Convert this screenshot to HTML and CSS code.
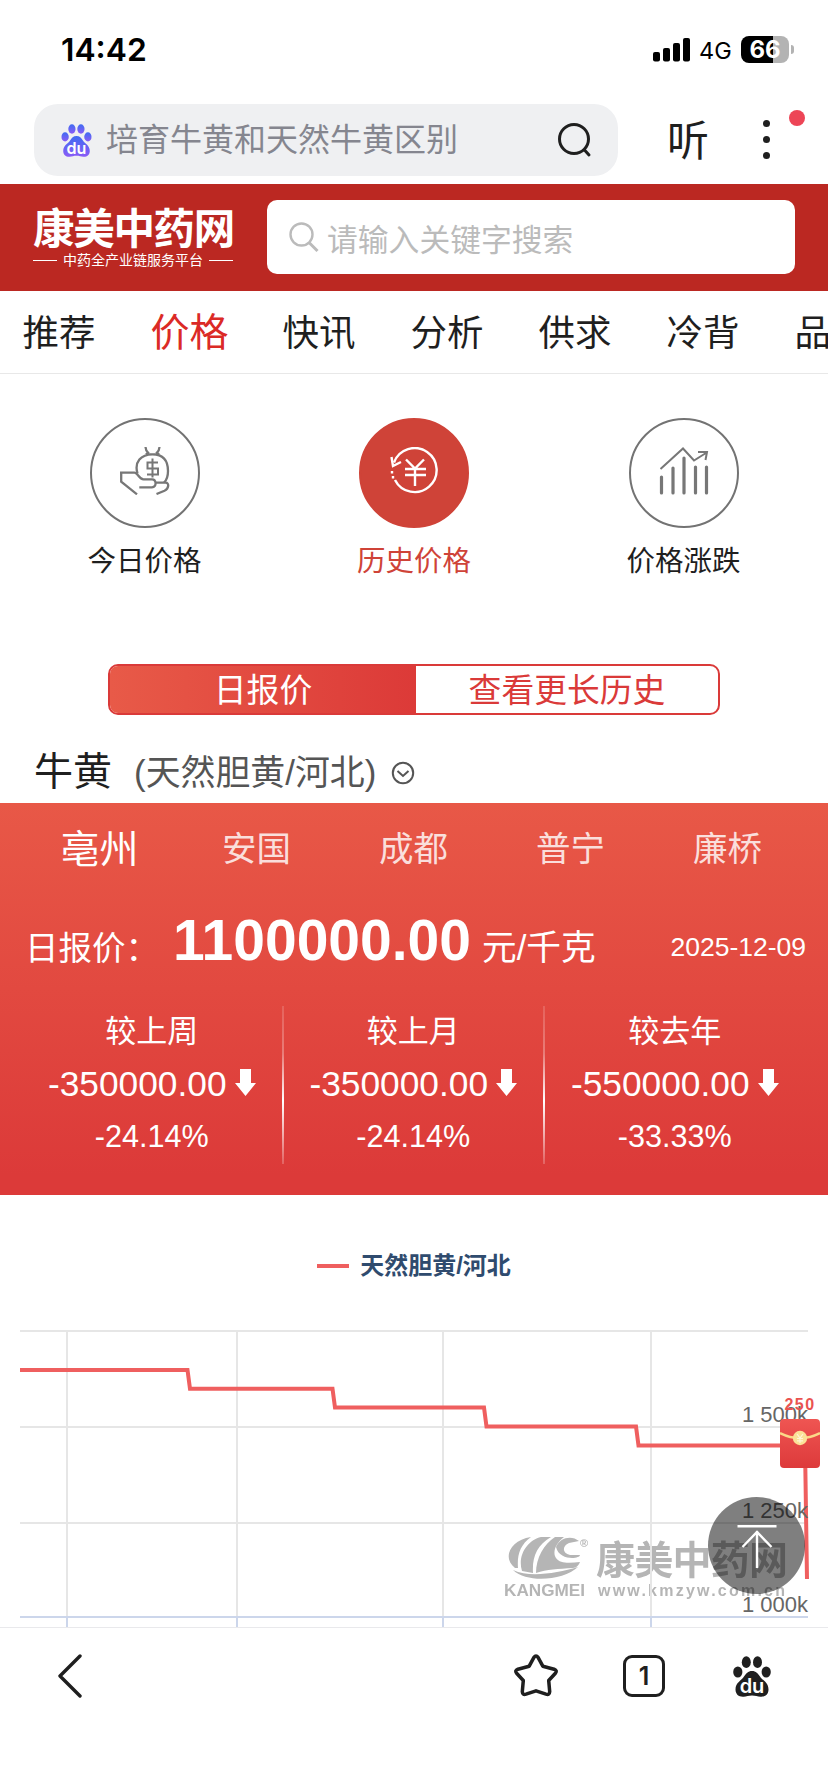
FILE: index.html
```html
<!DOCTYPE html>
<html lang="zh-CN">
<head>
<meta charset="utf-8">
<title>康美中药网</title>
<link rel="stylesheet" href="styles.css">
</head>
<body>
<svg class="defs" width="0" height="0" aria-hidden="true">
  <defs>
    <linearGradient id="pawGrad" x1="0" y1="0" x2="0" y2="1"><stop offset="0" stop-color="#3f6bf2"/><stop offset="1" stop-color="#8a5cf6"/></linearGradient>
    <symbol id="paw" viewBox="0 0 38 41">
      <ellipse cx="4.8" cy="16" rx="4.6" ry="5.6"/>
      <ellipse cx="13.3" cy="6.2" rx="4.5" ry="5.9"/>
      <ellipse cx="24.5" cy="6.2" rx="4.5" ry="5.9"/>
      <ellipse cx="33.2" cy="16" rx="4.6" ry="5.6"/>
      <path d="M19 15c4 0 6 2.500 8 5.500 2.500 4 8.500 6 8.500 13 0 5-3.500 7.500-8 7.200-3-.3-5-1.200-8.500-1.200s-5.500.9-8.500 1.200c-4.500.3-8-2.200-8-7.200 0-7 6-9 8.500-13 2-3 4-5.500 8-5.500z"/>
    </symbol>
  </defs>
</svg>
<div class="screen">
  <header class="status">
    <span class="time">14:42</span>
    <div class="status-right">
      <svg class="signal" width="38" height="24" viewBox="0 0 38 24"><rect x="0" y="14" width="7" height="9.500" rx="2"/><rect x="10" y="10" width="7" height="13.500" rx="2"/><rect x="20" y="5" width="7" height="18.500" rx="2"/><rect x="30" y="0" width="7" height="23.500" rx="2"/></svg>
      <span class="net">4G</span>
      <div class="battery"><span>66</span></div>
      <i class="nub"></i>
    </div>
  </header>

  <div class="address">
    <div class="address-box">
      <svg class="baidu" width="31" height="33" viewBox="0 0 38 41"><g fill="url(#pawGrad)"><use href="#paw"/></g><text x="19" y="37" text-anchor="middle" class="du">du</text></svg>
      <span class="query">培育牛黄和天然牛黄区别</span>
      <svg class="glass" width="36" height="36" viewBox="0 0 36 36" fill="none" stroke="#1f1f1f" stroke-width="3" stroke-linecap="round"><circle cx="17" cy="17" r="14.500"/><path d="M27.500 28l4.500 5"/></svg>
    </div>
    <span class="listen">听</span>
    <div class="more"><i></i><i></i><i></i><b></b></div>
  </div>

  <div class="brand">
    <div class="logo">
      <div class="logo-name">康美中药网</div>
      <div class="logo-sub"><i></i><span>中药全产业链服务平台</span><i></i></div>
    </div>
    <div class="search">
      <svg width="30" height="31" viewBox="0 0 30 31" fill="none" stroke="#bbb" stroke-width="2.400"><circle cx="12.500" cy="12.500" r="11"/><path d="M20 20.500l8.500 8.500" stroke-width="3"/></svg>
      <span>请输入关键字搜索</span>
    </div>
  </div>

  <nav class="tabs">
    <a>推荐</a><a class="on">价格</a><a>快讯</a><a>分析</a><a>供求</a><a>冷背</a><a>品种</a>
  </nav>

  <section class="kinds">
    <div class="kind">
      <div class="disc">
        <svg width="50" height="48" viewBox="0 0 50 48" fill="none" stroke="#777" stroke-width="2.300"><path d="M25.500 0q.2 3.500 2.500 5.500l-2 2M39.500 0q-.2 3.500-2.500 5.500l2 2M26 7.300h13M17.500 26.500C14 15 21 7.300 32.500 7.300S48 14 48 24q0 8-4 11.500"/><path d="M0 25.700h14.500c3.500 0 4.500 6.600 9 6.600h8.500c4.500 0 5 8 0 8H19.300M36 35.700h9.500c4 0 3.500 6-1 8l-8 3.300M1.200 25.700v9L17 47.300"/><path d="M38 15.500H27.500v6H38v6H27M32.500 11.500v19" stroke-width="2"/></svg>
      </div>
      <span>今日价格</span>
    </div>
    <div class="kind on">
      <div class="disc">
        <svg width="48" height="48" viewBox="0 0 48 48" fill="none" stroke="#fff" stroke-width="2.400"><path d="M4 15.500A22 22 0 1 1 5 33"/><path d="M1.500 10l1.500 9 8-4"/><path d="M2 24v2.500M3 29v2.500M16 12.500l9 9 9-9M25 21v18M15 22h21M15 28h21"/></svg>
      </div>
      <span>历史价格</span>
    </div>
    <div class="kind">
      <div class="disc">
        <svg width="50" height="48" viewBox="0 0 50 48" fill="none" stroke="#777" stroke-width="2"><path d="M1.500 22L24 1.500 35 13.500 47 6M39 5l9 0-1.500 8"/><path d="M2.500 30v16M14 21v25M25 11v35M36.500 20v26M47.500 20v26" stroke-width="3.200" stroke-linecap="round"/></svg>
      </div>
      <span>价格涨跌</span>
    </div>
  </section>

  <div class="switch"><span class="on">日报价</span><span>查看更长历史</span></div>

  <div class="herb">
    <h1>牛黄</h1>
    <span>(天然胆黄/河北)</span>
    <svg width="24" height="24" viewBox="0 0 24 24" fill="none" stroke="#555" stroke-width="2"><circle cx="12" cy="12" r="10.200"/><path d="M6.500 10l5.500 5 5.500-5"/></svg>
  </div>

  <section class="panel">
    <div class="cities"><span class="on">亳州</span><span>安国</span><span>成都</span><span>普宁</span><span>廉桥</span></div>
    <div class="quote">
      <span class="quote-label">日报价：</span>
      <strong>1100000.00</strong>
      <span class="unit">元/千克</span>
      <time>2025-12-09</time>
    </div>
    <div class="changes">
      <div class="change"><span class="name">较上周</span><span class="amount">-350000.00<svg width="21" height="27" viewBox="0 0 21 27"><path d="M5 0h11v14h5L10.500 27 0 14h5z"/></svg></span><span class="rate">-24.14%</span></div>
      <div class="change"><span class="name">较上月</span><span class="amount">-350000.00<svg width="21" height="27" viewBox="0 0 21 27"><path d="M5 0h11v14h5L10.500 27 0 14h5z"/></svg></span><span class="rate">-24.14%</span></div>
      <div class="change"><span class="name">较去年</span><span class="amount">-550000.00<svg width="21" height="27" viewBox="0 0 21 27"><path d="M5 0h11v14h5L10.500 27 0 14h5z"/></svg></span><span class="rate">-33.33%</span></div>
    </div>
  </section>

  <section class="trend">
    <div class="legend"><i></i><span>天然胆黄/河北</span></div>
    <svg class="chart" width="828" height="327" viewBox="0 1300 828 327">
      <g class="mark">
        <path d="M515 1568c-13-10-5-28 16-31-11 8-14 18-13 31zM522 1571c-5-16 6-31 19-34l10 0c-14 8-19 20-18 36zM536 1573c0-15 8-29 19-36h9c-8 6-12 15-8 21 4 6 14 5 24 4-1 3-4 6-7 6-15 1-26 1-37 5zM556 1547c4-10 16-12 23-6l-10 2c-7 3-7 10 1 12h10c0 4-21 6-24-8zM513 1570c17 8 44 3 65-3-14 13-50 17-65 3z"/>
        <text x="504" y="1596" font-size="17" textLength="81" lengthAdjust="spacingAndGlyphs">KANGMEI</text>
        <text x="580" y="1547" font-size="11">®</text>
        <text x="596" y="1574" font-size="39" textLength="192" class="cjk">康美中药网</text>
        <text x="598" y="1596" font-size="16" textLength="187">www.kmzyw.com.cn</text>
      </g>
      <g stroke="#e6e6e6" stroke-width="2" fill="none">
        <path d="M20 1331H808M20 1427H808M20 1523H808M67 1330V1617M237 1330V1617M443 1330V1617M651 1330V1617"/>
      </g>
      <path d="M20 1617H808M67 1617V1627M237 1617V1627M443 1617V1627M651 1617V1627" stroke="#ccd6eb" stroke-width="2"/>
      <path d="M20 1370H187.500L190 1388.800H332.500L335 1407.500H484L486.500 1426.500H636L638.500 1445.500H805L807 1579" fill="none" stroke="#ef5f5f" stroke-width="4"/>
      <g class="ticks"><text x="808" y="1421.500">1 500k</text><text x="808" y="1517.500">1 250k</text><text x="808" y="1611.500">1 000k</text></g>
    </svg>
    <div class="packet">
      <span>250</span>
      <svg width="40" height="49" viewBox="0 0 40 49"><defs><linearGradient id="pk" x1="0" y1="0" x2="0" y2="1"><stop offset="0" stop-color="#ef5552"/><stop offset="1" stop-color="#dd3a3b"/></linearGradient></defs><rect width="40" height="49" rx="4" fill="url(#pk)"/><path d="M0 14q20 10 40 0" fill="none" stroke="#fbd888" stroke-width="2.500"/><circle cx="20" cy="19" r="7.200" fill="#fbe197"/><path d="M17 15l3 4 3-4M20 19v5M17 19.500h6M17 21.800h6" stroke="#fff6d8" stroke-width="1.200" fill="none"/></svg>
    </div>
    <div class="totop"><svg width="40" height="44" viewBox="0 0 40 44" fill="none" stroke="#fff" stroke-width="2.400"><path d="M.5 2.200h39M20 7v37M5.500 23L20 8l14.500 15"/></svg></div>
  </section>

  <footer class="toolbar">
    <svg class="back" width="26" height="44" viewBox="0 0 26 44" fill="none" stroke="#1f1f1f" stroke-width="3.400" stroke-linecap="round" stroke-linejoin="round"><path d="M23 2L3 22l20 20"/></svg>
    <div class="tools">
      <svg width="44" height="44" viewBox="-1 0 44 44" fill="none" stroke="#1f1f1f" stroke-width="3.500" stroke-linejoin="round"><path d="M18.800 3.600q2.200-3 4.400 0l4.600 8.600 11.300 3q3.400 1.300 1.300 4l-6.700 7.300 1 11.200q-.2 3.600-3.700 2.500L21 36.800l-10 3.400q-3.500 1.100-3.700-2.500l1-11.200L1.600 19.200q-2.100-2.700 1.300-4l11.300-3z"/></svg>
      <div class="count">1</div>
      <svg width="38" height="41" viewBox="0 0 38 41"><g fill="#1f1f1f"><use href="#paw"/></g><text x="19" y="37" text-anchor="middle" class="du">du</text></svg>
    </div>
  </footer>
</div>
</body>
</html>
```
FILE: styles.css
```css
* { box-sizing: border-box; }
body { margin: 0; background: #fff; font-family: "Liberation Sans", "Noto Sans CJK SC", sans-serif; color: #1f1f1f; }
svg { display: block; flex: none; }
.defs { position: absolute; }
.screen { width: 828px; height: 1792px; overflow: hidden; display: flex; flex-direction: column; white-space: nowrap; }
.screen > * { flex: none; }

.status { height: 104px; padding: 0 34px 5px 61px; display: flex; align-items: center; justify-content: space-between; font-family: Inter, sans-serif; color: #000; }
.time { font-size: 31.800px; font-weight: 600; }
.status-right { display: flex; align-items: center; }
.net { font-size: 23.500px; margin: 1px 0 0 8px; width: 34px; }
.battery { width: 48px; height: 27px; margin-left: 8px; border-radius: 8px; background: linear-gradient(90deg, #000 66%, #b3b3b3 66%); color: #fff; font-size: 24px; font-weight: 700; line-height: 28px; text-align: center; }
.nub { width: 3px; height: 9px; margin-left: 2px; background: #b3b3b3; border-radius: 0 3px 3px 0; }

.address { height: 80px; padding-left: 34px; display: flex; align-items: flex-start; }
.address-box { width: 584px; height: 72px; border-radius: 24px; background: #eff0f2; display: flex; align-items: center; padding: 0 25px 0 27px; }
.du { font-family: Inter, sans-serif; font-size: 20px; font-weight: 600; fill: #fff; }
.query { margin-left: 14px; font-size: 32px; color: #85868f; flex: 1; line-height: 75px; }
.listen { font-size: 42px; line-height: 75px; margin-left: 49px; }
.more { position: relative; width: 7px; height: 39px; margin: 16px 0 0 54px; display: flex; flex-direction: column; justify-content: space-between; }
.more i { width: 7px; height: 7px; border-radius: 50%; background: #1f1f1f; }
.more b { position: absolute; left: 26px; top: -10px; width: 16px; height: 16px; border-radius: 50%; background: #ed4556; }

.brand { height: 107px; background: #bb2822; padding: 0 33px; display: flex; justify-content: space-between; align-items: flex-start; }
.logo { width: 200px; padding-top: 23px; color: #fff; }
.logo-name { font-size: 41.500px; font-weight: 700; line-height: 46px; letter-spacing: -1.300px; }
.logo-sub { display: flex; align-items: center; justify-content: space-between; font-size: 14px; line-height: 14px; }
.logo-sub i { width: 24px; height: 1px; background: #fff; }
.search { width: 528px; height: 74px; margin-top: 16px; border-radius: 10px; background: #fff; padding-left: 22px; display: flex; align-items: center; color: #bbb; font-size: 30.800px; }
.search svg { margin-top: 1px; }
.search span { margin: 0 0 0 8px; }

.tabs { height: 83px; border-bottom: 1px solid #e8e8e8; display: grid; grid-template-columns: 118px 143px repeat(5, 128px); overflow: hidden; }
.tabs a { text-align: center; font-size: 36.500px; line-height: 86px; }
.tabs .on { font-size: 39px; color: #db2a26; line-height: 84px; }
.tabs .on ~ a { margin: 0 6px 0 -6px; }

.kinds { display: grid; grid-template-columns: repeat(3, 269.500px); justify-content: center; padding-top: 44px; height: 290px; }
.kind { display: flex; flex-direction: column; align-items: center; font-size: 28.500px; }
.disc { width: 110px; height: 110px; border: 2px solid #737373; border-radius: 50%; display: flex; align-items: center; justify-content: center; padding-bottom: 4px; }
.kind > span { line-height: 40px; margin-top: 13px; }
.kind.on { color: #cf4338; }
.kind.on .disc { background: #cf4338; border-color: #cf4338; }

.switch { width: 612px; height: 51px; margin-left: 108px; border: 2px solid #da3a39; border-radius: 10px; overflow: hidden; display: grid; grid-template-columns: 306px 1fr; font-size: 32.800px; line-height: 50px; text-align: center; color: #da3a39; }
.switch .on { background: linear-gradient(90deg, #e85a48, #dc3a38); color: #fff; }

.herb { height: 88px; padding: 26px 0 0 34px; display: flex; align-items: center; }
.herb h1 { margin: 0; font-size: 39px; line-height: 60px; font-weight: 400; }
.herb span { font-size: 34.900px; color: #555; margin: -4px 0 0 22px; }
.herb svg { margin: 2px 0 0 15px; }

.panel { height: 392px; background: linear-gradient(#e85847, #dc3a39 95%); color: #fff; }
.cities { display: grid; grid-template-columns: repeat(5, 157px); padding-left: 21px; height: 92px; line-height: 93px; text-align: center; font-size: 34.500px; color: rgba(255,255,255,.82); }
.cities .on { font-size: 39px; color: #fff; }
.quote { height: 110px; padding: 0 22px 0 25px; display: flex; align-items: baseline; line-height: 90px; }
.quote-label { font-size: 33.500px; width: 148px; }
.quote strong { font-size: 57px; width: 301px; }
.unit { font-size: 34.700px; margin-left: 8px; }
.quote time { font-size: 26.500px; margin-left: auto; line-height: 84px; align-self: flex-start; margin-top: 10px; }
.changes { display: grid; grid-template-columns: repeat(3, 261.500px); padding-left: 21px; height: 158px; }
.change { position: relative; display: flex; flex-direction: column; align-items: center; padding-top: 2px; }
.change + .change::before { content: ""; position: absolute; left: -1px; top: 1px; width: 2px; height: 158px; background: linear-gradient(rgba(255,255,255,.15), rgba(255,255,255,.3) 30%, #fff 60%, rgba(255,255,255,.2)); }
.name { font-size: 31px; line-height: 50px; }
.amount { display: flex; align-items: center; font-size: 35.300px; line-height: 54px; }
.amount svg { fill: #fff; margin: -4px 0 0 8px; }
.rate { font-size: 30.600px; line-height: 50px; }

.trend { height: 432px; position: relative; }
.legend { height: 105px; padding-top: 37px; display: flex; align-items: flex-start; justify-content: center; line-height: 68px; font-size: 24px; font-weight: 700; color: #2f4b6e; }
.legend i { width: 32px; height: 4px; background: #ef5f5f; margin: 32px 11px 0 0; }
.mark { fill: #b5b5b5; font-weight: 700; filter: blur(.6px); }
.mark .cjk { font-family: "Noto Sans CJK SC", sans-serif; }
.ticks { font-size: 22px; fill: #666; text-anchor: end; }
.packet { position: absolute; left: 780px; top: 200px; width: 40px; }
.packet span { display: block; height: 24px; line-height: 19px; margin: 0 -4px; font-size: 16px; font-weight: 700; letter-spacing: 1.500px; color: #ea5350; text-align: center; }
.totop { position: absolute; left: 708px; top: 302px; width: 97px; height: 97px; border-radius: 50%; background: rgba(0,0,0,.5); padding: 27px 0 0 29px; }

.toolbar { height: 165px; border-top: 1px solid #e9e9ec; background: #fff; padding: 26px 57px 0; display: flex; justify-content: space-between; align-items: flex-start; }
.tools { display: flex; align-items: center; }
.count { width: 42px; height: 42px; margin: 0 68px 0 65px; border: 3.500px solid #1f1f1f; border-radius: 9px; text-align: center; font: 600 25px/36px Inter, sans-serif; }
```
